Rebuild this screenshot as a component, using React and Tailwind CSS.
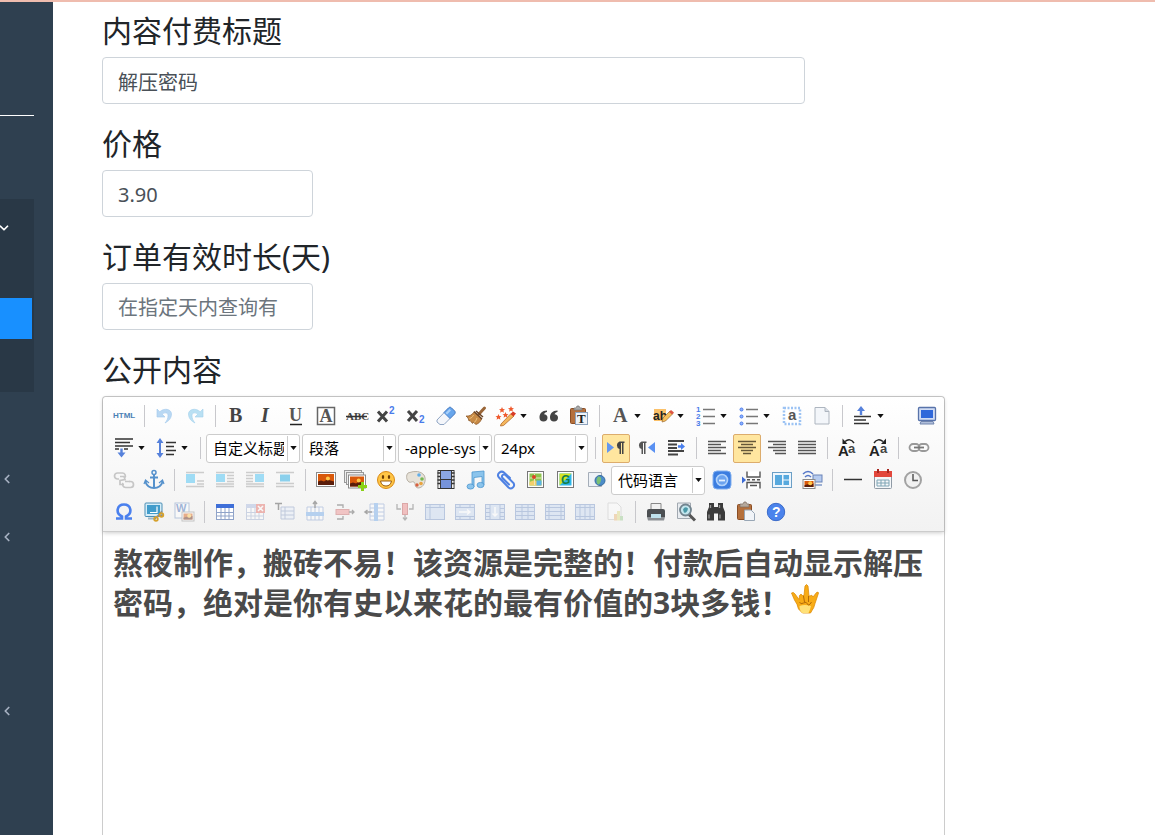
import { ChevronDown, ChevronLeft } from 'lucide-react';

const serif = 'Liberation Serif, serif';
const sans = 'Liberation Sans, sans-serif';

// shared pieces of the toolbar drawings
const Grid = ({ head = '#3f6fd8', line = '#8fa3c9', fill = '#fff' }) => (
  <>
    <rect x="1.500" y="3" width="17" height="14.500" fill={fill} stroke={line} />
    <path d="M2 10.500h16M2 14h16M6 6v11M10 6v11M14 6v11" stroke={line} />
    <rect x="1" y="2" width="18" height="4" fill={head} />
  </>
);

const Cells = ({ children, d }) => (
  <>
    <rect x="0.500" y="2.500" width="19" height="15" fill="#c9daf2" stroke="#7f9bcb" />
    <path d={d} stroke="#7f9bcb" fill="none" />
    {children}
  </>
);

const Photo = ({ x, y, w, h }) => (
  <>
    <rect x={x} y={y} width={w} height={h} fill="#fff" stroke="#8b8b8b" />
    <rect x={x + 1.5} y={y + 1.5} width={w - 3} height={h - 3} fill="#d9590b" />
    <path d={`M${x + 1.5} ${y + h * 0.65}l3-1 3 1 3-2 ${w - 12} 2v${h * 0.35 - 1.5}h${3 - w}z`} fill="#5a1d0a" />
    <circle cx={x + w * 0.6} cy={y + h * 0.42} r="2" fill="#ffc94a" />
  </>
);

const lines = (d, color = '#444', width = 1.5) => <path d={d} stroke={color} strokeWidth={width} fill="none" />;

const icons = {
  html: <text x="-1" y="12" fontFamily={sans} fontSize="8" fontWeight="700" fill="#4a80b5">HTML</text>,
  undo: <path d="M2 3v8h8L7.300 8.300C9.500 6 13 6.500 13 9.500c0 3-1 5-3 7.500 4-2 6.500-5 6.500-9C16.500 3 9 1.500 4.800 5.800z" fill="#b9d8f3" stroke="#a3c9ec" strokeWidth=".6" />,
  redo: <path d="M18 3v8h-8l2.700-2.700C10.500 6 7 6.500 7 9.500c0 3 1 5 3 7.500-4-2-6.500-5-6.500-9C3.500 3 11 1.500 15.200 5.800z" fill="#b9e0f3" stroke="#a3d0ec" strokeWidth=".6" />,
  bold: <text x="3" y="16" fontFamily={serif} fontSize="20" fontWeight="700" fill="#444">B</text>,
  italic: <text x="5" y="16" fontFamily={serif} fontSize="20" fontWeight="700" fontStyle="italic" fill="#444">I</text>,
  underline: (
    <>
      <text x="3" y="15" fontFamily={serif} fontSize="18" fontWeight="700" fill="#555">U</text>
      {lines('M4 18.500h12', '#222')}
    </>
  ),
  fontborder: (
    <>
      <rect x="1.500" y="1.500" width="17" height="17" fill="#fff" stroke="#666" strokeWidth="1.500" />
      <text x="3.500" y="16" fontFamily={serif} fontSize="18" fontWeight="700" fill="#555">A</text>
    </>
  ),
  strike: (
    <>
      <text x="0" y="14" fontFamily={serif} fontSize="11" fontWeight="700" fill="#444">ABC</text>
      {lines('M0 10.500h21', '#333')}
    </>
  ),
  superscript: (
    <>
      {lines('M2 5.500l9 10M11 5.500l-9 10', '#444', 3)}
      <text x="13" y="8" fontFamily={sans} fontSize="10" fontWeight="700" fill="#4a7bea">2</text>
    </>
  ),
  subscript: (
    <>
      {lines('M2 5l9 10M11 5L2 15', '#444', 3)}
      <text x="13" y="17" fontFamily={sans} fontSize="10" fontWeight="700" fill="#4a7bea">2</text>
    </>
  ),
  eraser: (
    <>
      <path d="M1 14L12.500 2c1-1 2-1 3 0l3 3c.8.8.8 2 0 3L8 18.500H4L1 16z" fill="#f4f6fa" stroke="#8fa5c4" />
      <path d="M8 6.500L12.500 2c1-1 2-1 3 0l3 3c.8.8.8 2 0 3L14 12.500z" fill="#68a6ec" stroke="#4b82cb" />
      <path d="M9.500 7l4-4 1.500 1.500-4 4z" fill="#a9d0f9" />
    </>
  ),
  broom: (
    <>
      <path d="M18.500 2L13 8" stroke="#9a6638" strokeWidth="3" strokeLinecap="round" />
      <path d="M8 6l7.500 7c-1 3-3 4.500-5.500 5.500L7 16l-.5 1.500L4 14.500l-1 .5L2 12l-2-2c3 .5 6-1 8-4z" fill="#c78a45" stroke="#865222" strokeWidth=".7" />
      <path d="M8 5.500l8 7.500M10 5l7 6" stroke="#6b4323" strokeWidth="1.500" />
      <path d="M7.500 9c-1 2-2 3-4 3.500m7.500-.5c-1 3-2 4-3 4.500" stroke="#eec27f" />
    </>
  ),
  wand: (
    <>
      <path d="M5 18L15 7.500 18 10 7.500 19.500 4.500 20z" fill="#f4b65c" stroke="#b46a2a" strokeWidth=".8" />
      <path d="M14.500 8l2.500-2.500L20 7.500 17.500 10.500z" fill="#d83b26" />
      <g fill="#ef5a2e">
        <path d="M6 1l.9 2 2.100.2-1.600 1.400.5 2.100L6 5.600 4.100 6.700l.5-2.100L3 3.200 5.100 3z" />
        <path d="M15 0l.9 2 2.100.2-1.600 1.400.5 2.100L15 4.600l-1.900 1.100.5-2.100L12 2.200l2.100-.2z" />
        <path d="M2.500 8l.9 2 2.100.2-1.600 1.400.5 2.100-1.900-1.100-1.900 1.100.5-2.100L-.5 10.200 1.600 10z" />
        <path d="M9.500 6l.9 2 2.100.2-1.600 1.400.5 2.100-1.900-1.100-1.900 1.100.5-2.100L6.500 8.200 8.600 8z" />
      </g>
    </>
  ),
  quote: (
    <g fill="#444">
      <path d="M8 4.500C3 4.500.5 7.500.5 11.500c0 2.500 1.500 4 4 4s4-1.600 4-3.700S7 8.300 5 8.300C5.500 7 6.500 6.300 8 6z" />
      <path d="M18.500 4.500C13.500 4.500 11 7.500 11 11.500c0 2.500 1.500 4 4 4s4-1.600 4-3.700-1.500-3.500-3.500-3.500c.5-1.300 1.500-2 3-2.300z" />
    </g>
  ),
  pastetext: (
    <>
      <rect x="1.500" y="2.500" width="15" height="15" rx="1" fill="#b5703c" stroke="#8a4d24" />
      <path d="M5 4V2h2l1-2h2l1 2h2v2z" fill="#aaa" stroke="#777" strokeWidth=".7" />
      <rect x="6.500" y="6.500" width="12" height="12" fill="#eff3f8" stroke="#8ca2bc" />
      <text x="8" y="17" fontFamily={serif} fontSize="13" fontWeight="700" fill="#222">T</text>
    </>
  ),
  forecolor: <text x="3" y="16" fontFamily={serif} fontSize="20" fontWeight="700" fill="#555">A</text>,
  backcolor: (
    <>
      <rect x="1" y="3" width="12" height="12" fill="#fbc169" />
      <text x="0" y="14" fontFamily={sans} fontSize="12" fontWeight="700" fill="#222">ab</text>
      <path d="M9 16l1-4 7-7 3 2.500-7.500 7.500z" fill="#f6c15c" stroke="#9c6a33" strokeWidth=".7" />
      <path d="M16 6l2-2 3 2.500-2 2z" fill="#dc5544" />
    </>
  ),
  ol: (
    <>
      <g fontFamily={sans} fontSize="8" fontWeight="700" fill="#4a7bea">
        <text x="0" y="6">1</text>
        <text x="0" y="13">2</text>
        <text x="0" y="20">3</text>
      </g>
      {lines('M7 3.500h12M7 10.500h12M7 17.500h12', '#777')}
    </>
  ),
  ul: (
    <>
      <g fill="#8eb2ff" stroke="#4a7bea">
        <circle cx="2.500" cy="3.500" r="1.500" />
        <circle cx="2.500" cy="10.500" r="1.500" />
        <circle cx="2.500" cy="17.500" r="1.500" />
      </g>
      {lines('M7 3.500h12M7 10.500h12M7 17.500h12', '#777')}
    </>
  ),
  selectall: (
    <>
      <rect x="2" y="2" width="16" height="16" fill="#fff" stroke="#9cc3f4" strokeWidth="2.500" strokeDasharray="2 1.500" />
      <text x="6" y="14" fontFamily={sans} fontSize="15" fontWeight="700" fill="#555">a</text>
    </>
  ),
  page: (
    <>
      <path d="M3 1.500h10l4 4v12.500H3z" fill="#f3f6fa" stroke="#adb5bf" />
      <path d="M13 1.500v4h4" fill="#d6dce5" stroke="#adb5bf" />
    </>
  ),
  spacetop: (
    <>
      <path d="M8 0l4 5H9.200v4H6.800V5H4z" fill="#5681db" />
      {lines('M1 10.500h17M1 14h12M1 17.500h15', '#333', 1.7)}
    </>
  ),
  screen: (
    <>
      <rect x="1.500" y="1.500" width="17" height="13" rx="1" fill="#d0dcf4" stroke="#5873aa" strokeWidth="1.300" />
      <rect x="4" y="4" width="12" height="8" fill="#2f68da" />
      <path d="M4 15.500h12l1 2.500H3z" fill="#b1bfda" stroke="#7185ae" />
    </>
  ),
  spacebottom: (
    <>
      <path d="M7.500 19.500l4-5H8.700v-4H6.300v4h-2.800z" fill="#5681db" />
      {lines('M1 1h18M1 4.500h15M1 8h18M1 11h4M10 11h4', '#333', 1.7)}
    </>
  ),
  lineheight: (
    <>
      <path d="M3 0l3.500 5H4v10h2.500L3 20l-3.500-5H2V5H-.5z" fill="#5681db" />
      {lines('M9 4.500h10M9 8.500h8M9 12.500h10M9 16.500h8', '#333')}
    </>
  ),
  ltr: (
    <>
      <path d="M1 4l7 5.500L1 15z" fill="#6597ee" />
      <path d="M18.500 3.500h-5a4 4 0 000 7.500v5H15V5h1v11h1.500V5h1z" fill="#444" />
    </>
  ),
  rtl: (
    <>
      <path d="M19 4l-7 5.500 7 5.500z" fill="#5a91f2" />
      <path d="M10.500 3.500h-5a4 4 0 000 7.500v5H7V5h1v11h1.500V5h1z" fill="#555" />
    </>
  ),
  indent: (
    <>
      {lines('M2 3h16M2 6.500h9M2 10h9M2 13h16M2 16.500h10', '#444', 1.8)}
      <path d="M12 7.200h3V5l4 3.500-4 3.500V9.800h-3z" fill="#4a80ee" />
    </>
  ),
  left: lines('M1 3.500h18M1 6.500h13M1 9.500h18M1 12.500h13M1 15.500h18', '#555'),
  center: lines('M1 3.500h18M4 6.500h12M1 9.500h18M4 12.500h12M6 15.500h8', '#655838'),
  right: lines('M1 3.500h18M6 6.500h13M1 9.500h18M6 12.500h13M8 15.500h11', '#555'),
  justify: lines('M1 3.500h18M1 6.500h18M1 9.500h18M1 12.500h18M1 15.500h18', '#555'),
  upper: (
    <>
      <text x="0" y="18" fontFamily={sans} fontSize="15" fontWeight="700" fill="#222">A</text>
      <text x="10" y="15" fontFamily={sans} fontSize="13" fontWeight="700" fill="#444">a</text>
      {lines('M7 3.500q5-4 9 1.500', '#222')}
      <path d="M4.500.5v5.500h5z" fill="#222" />
    </>
  ),
  lower: (
    <>
      <text x="1" y="18" fontFamily={sans} fontSize="15" fontWeight="700" fill="#222">A</text>
      <text x="12" y="15" fontFamily={sans} fontSize="13" fontWeight="700" fill="#444">a</text>
      {lines('M6 5q4-5.500 9-1.500', '#222')}
      <path d="M18 .5v5.500h-5z" fill="#222" />
    </>
  ),
  link: (
    <g fill="none" stroke="#999" strokeWidth="1.800">
      <rect x="0.500" y="6" width="10" height="7" rx="3.500" />
      <rect x="9.500" y="6" width="10" height="7" rx="3.500" />
      <path d="M5 9.500h10" stroke="#777" />
    </g>
  ),
  unlink: (
    <g fill="none" stroke="#c6c6c6" strokeWidth="1.700">
      <path d="M5 9H3.500a3 3 0 010-6h5a3 3 0 012.500 4.500M15 11.500h1.500a3 3 0 010 6h-5a3 3 0 01-2.500-4.500" />
      <path d="M6 6.500h4l1 3-5 1v4h4M11 11.500h5" />
    </g>
  ),
  anchor: (
    <g fill="none" stroke="#5591cc" strokeWidth="2">
      <circle cx="10" cy="2.500" r="2" strokeWidth="1.500" />
      <path d="M10 5v13M6 7.500h8M1.500 12q2 6 8.500 6t8.500-6" />
      <path d="M0 14l1.500-4L5 13M20 14l-1.500-4L15 13" strokeWidth="1.200" />
    </g>
  ),
  imgnone: (
    <>
      {lines('M1 2.500h18M12 11h7M12 14h7M1 16.500h18', '#ccc')}
      <rect x="1" y="4" width="9" height="9" fill="#9fdcf5" />
    </>
  ),
  imgleft: (
    <>
      {lines('M1 2.500h18M12 5.500h7M12 8.500h7M12 11.500h7M1 14h18M1 16.500h18', '#ccc')}
      <rect x="1" y="4" width="9" height="8" fill="#9fdcf5" />
    </>
  ),
  imgright: (
    <>
      {lines('M1 2.500h18M1 5.500h7M1 8.500h7M1 11.500h7M1 14h18M1 16.500h18', '#ccc')}
      <rect x="10" y="4" width="9" height="8" fill="#9fdcf5" />
    </>
  ),
  imgcenter: (
    <>
      {lines('M1 2.500h18M1 13.500h18M1 16.500h18', '#ccc')}
      <rect x="5" y="4.500" width="10" height="7" fill="#8bd0ec" />
    </>
  ),
  image: <Photo x={0.5} y={2.5} w={19} h={14} />,
  images: (
    <>
      <rect x="-1.500" y="0.500" width="17" height="12" fill="#eee" stroke="#999" />
      <rect x=".5" y="2.500" width="17" height="12" fill="#eee" stroke="#999" />
      <Photo x={2.5} y={5} w={17} h={13} />
      <path d="M15 12h3v3H21v3h-3V21h-3v-3h-3v-3h3z" fill="#8ad116" />
    </>
  ),
  smile: (
    <>
      <circle cx="10" cy="10" r="8.500" fill="#ffc545" stroke="#d98a16" />
      <ellipse cx="7" cy="7" rx="1.200" ry="2" fill="#6b3c05" />
      <ellipse cx="13" cy="7" rx="1.200" ry="2" fill="#6b3c05" />
      <path d="M4.500 11h11q-1 5-5.500 5t-5.500-5z" fill="#fff" stroke="#9b5b0b" />
    </>
  ),
  scrawl: (
    <>
      <path d="M2 3Q13-1 18 5c3 5 0 13-6 13-4-1-2-4-4-6-2-1-3 1-5 0-3-2-3-7-1-9z" fill="#e7e2d8" stroke="#b8b1a5" />
      <circle cx="13" cy="5" r="1.800" fill="#62aee8" />
      <circle cx="16" cy="9" r="1.800" fill="#74b851" />
      <circle cx="15" cy="13.500" r="1.800" fill="#e8a33d" />
      <circle cx="11" cy="15" r="1.700" fill="#d8603f" />
    </>
  ),
  video: (
    <>
      <rect x="1.500" y="0" width="17" height="19" fill="#333" />
      <rect x="5" y="1" width="10" height="8" fill="#8ba7e4" />
      <rect x="5" y="10" width="10" height="8" fill="#7693da" />
      {lines('M3.200 1v17M16.800 1v17', '#eee', 1.7)}
      <path d="M1.500 3h3M1.500 6.500h3M1.500 10h3M1.500 13.500h3M15.500 3h3M15.500 6.500h3M15.500 10h3M15.500 13.500h3" stroke="#333" strokeWidth="1.300" />
    </>
  ),
  music: (
    <g fill="#8bc4ec" stroke="#4c97cf" strokeWidth=".8">
      <path d="M6 2l12-1v14h-2V6.500L8 7.500V17H6z" />
      <ellipse cx="4.500" cy="16.500" rx="3.500" ry="2.600" />
      <ellipse cx="14.500" cy="15" rx="3.500" ry="2.600" />
    </g>
  ),
  attach: <path d="M14 8L8 2.500C5 0 0 4 3 7.500l9.500 10c3 2.500 7-1 5-4.500L9.500 5C7 3.500 5 6 6.500 8l6.500 6.500" fill="none" stroke="#4f82e3" strokeWidth="2" strokeLinecap="round" />,
  map: (
    <>
      <rect x="1.500" y="1.500" width="16" height="16" fill="#fff" stroke="#777" />
      <rect x="3.500" y="3.500" width="12" height="12" fill="#8dc44f" />
      <path d="M3.500 12l5-2 7 4v1.500h-12z" fill="#f3cf6b" />
      <path d="M8.500 4v11M4 8h11" stroke="#e9e6bb" />
      <path d="M10.500 10.500h5v5h-5z" fill="#59b3e6" />
      <circle cx="8" cy="7" r="2" fill="#dc4328" />
    </>
  ),
  gmap: (
    <>
      <rect x="1.500" y="1.500" width="16" height="16" fill="#fff" stroke="#777" />
      <rect x="3.500" y="3.500" width="12" height="12" fill="#2cb5e8" />
      <path d="M3.500 3.500h12l-12 12z" fill="#d6e522" />
      <text x="5" y="14" fontFamily={sans} fontSize="12" fontWeight="700" fill="#137e47">G</text>
    </>
  ),
  frame: (
    <>
      <path d="M2.500 2.500h13v14h-13z" fill="#eef2f7" stroke="#a5adb8" />
      <circle cx="14" cy="10.500" r="5" fill="#4c8cc9" stroke="#356b9e" />
      <path d="M12 6.500q4 0 3 4t-3 4q-3-3 0-8z" fill="#7bc172" />
    </>
  ),
  webapp: (
    <>
      <rect x="1" y="1" width="18" height="18" rx="4" fill="#3b7de0" stroke="#81b0f0" />
      <circle cx="10" cy="10" r="5.500" fill="#6ba3ef" stroke="#b0d2fb" strokeWidth="1.600" />
      {lines('M7 10.500h6', '#e4f0ff', 1.8)}
    </>
  ),
  pagebreak: (
    <>
      <path d="M0 6.500l4 3.500L0 13.500z" fill="#3d6bd4" />
      <path d="M5 1.500V7h13V1.500M5 18.500v-6h13v6" fill="#fff" stroke="#555" strokeWidth="1.400" />
      {lines('M5 9.800h3M10 9.800h3M15 9.800h3M8 15.500h7', '#555')}
    </>
  ),
  template: (
    <>
      <rect x="0.500" y="2.500" width="19" height="15" fill="#eef6fd" stroke="#6b9fc6" />
      <rect x="3" y="5" width="7" height="10" fill="#57a9de" />
      <path d="M11.500 5H17v4.500h-5.500zM11.500 10.500H17V15h-5.500z" fill="#57a9de" />
    </>
  ),
  background: (
    <>
      <path d="M1 4q5-5 10 0M3 7q3-3 6 0" fill="none" stroke="#5577c7" strokeWidth="1.500" />
      <rect x="11" y="5" width="9" height="7" fill="#b6cbef" stroke="#6a83b8" />
      <path d="M13 14h7v2h-7z" fill="#9db0d3" />
      <Photo x={1} y={9.5} w={12} h={9} />
    </>
  ),
  hr: lines('M1 9.500h18', '#333'),
  date: (
    <>
      <rect x="1.500" y="2.500" width="17" height="16" rx="1" fill="#f5f7f9" stroke="#8f9aa5" />
      <path d="M1 1h18v6H1z" fill="#e2473c" />
      {lines('M5-1v4M15-1v4', '#a62720', 2)}
      <path d="M4 10h12v6H4zM8 10v6M12 10v6M4 13h12" fill="none" stroke="#7ea5b5" />
    </>
  ),
  time: (
    <>
      <circle cx="10" cy="10" r="8" fill="#f1f1f1" stroke="#a2a2a2" strokeWidth="2" />
      {lines('M10 4v6.500h5', '#555')}
    </>
  ),
  omega: <path d="M2 16.500h6v-2C1 11 3 2.500 10 2.500s9 8.500 2 12v2h6" fill="none" stroke="#4a80ee" strokeWidth="2.600" />,
  snap: (
    <>
      <rect x="1" y="1" width="17" height="13.500" rx="1" fill="#d5edf8" stroke="#4c8fb5" />
      <rect x="3" y="3" width="13" height="9" fill="#419ccb" />
      <path d="M6 10.500h7V4.500" fill="none" stroke="#fff" strokeWidth="1.200" />
      <path d="M4 15.500h8v2H4z" fill="#9db8c8" />
      <path d="M18 9l-7 8M19 13l-8 2" stroke="#8f8f8f" strokeWidth="1.300" />
      <g fill="none" stroke="#d6a12c" strokeWidth="1.800">
        <circle cx="12" cy="17" r="1.800" />
        <circle cx="17.500" cy="13" r="1.800" />
      </g>
    </>
  ),
  word: (
    <g opacity=".45">
      <rect x="1" y="1" width="14" height="15" fill="#fff" stroke="#7091bf" />
      <text x="2" y="10" fontFamily={sans} fontSize="11" fontWeight="700" fill="#3968b4">W</text>
      <Photo x={8} y={10} w={12} h={9} />
    </g>
  ),
  table: <Grid />,
  deltable: (
    <g opacity=".4">
      <Grid head="#9aaedb" />
      <rect x="11" y="2" width="9" height="9" fill="#e2574c" />
      {lines('M13 4l5 5M18 4l-5 5', '#fff')}
    </g>
  ),
  tabletitle: (
    <g opacity=".45">
      {lines('M0 1.500h7M3.500 1.500V8', '#444')}
      <path d="M6 5h13v12H6zM6 9h13M6 13h13M10 5v12" fill="#e5edf9" stroke="#8297c0" />
    </g>
  ),
  insrow: (
    <g opacity=".4">
      <path d="M2 5h16v13H2zM6 5v13M10 5v13M14 5v13" fill="#fff" stroke="#7492cb" />
      <rect x="1" y="10" width="18" height="4" fill="#5b9de8" />
      {lines('M10 6v-6.500M8 2L10-.5l2 2.500', '#333')}
    </g>
  ),
  delrow: (
    <g opacity=".45">
      <rect x="1" y="7.500" width="13" height="5" fill="#ee8c8c" stroke="#c45e5e" />
      {lines('M2 3h6v3M2 17h6v-3M14 10h5M17 8l2 2-2 2', '#555', 1.3)}
    </g>
  ),
  inscol: (
    <g opacity=".4">
      <path d="M5 2h14v16H5zM5 6h14M5 10h14M5 14h14" fill="#fff" stroke="#7492cb" />
      <rect x="9" y="1" width="4" height="18" fill="#5b9de8" />
      {lines('M7 10H0M2.500 8L0 10l2.500 2', '#333')}
    </g>
  ),
  delcol: (
    <g opacity=".5">
      <rect x="7.500" y="1.500" width="5" height="11" fill="#ee8c8c" stroke="#c45e5e" />
      {lines('M2 2v5h4M18 2v5h-4M10 13v5M8 15.500l2 2.500 2-2.500', '#777', 1.3)}
    </g>
  ),
  merge: <g opacity=".5"><Cells d="M1 5.500h18M5 3v14.500M15 3v3" /></g>,
  mergeright: (
    <g opacity=".5">
      <Cells d="M1 5.500h18M1 14.500h18M5 3v3M15 3v3M5 15v3M15 15v3">
        {lines('M4 10h11M12 7.500l3 2.500-3 2.500', '#fff')}
      </Cells>
    </g>
  ),
  mergedown: (
    <g opacity=".5">
      <Cells d="M5 3v14.500M15 3v14.500M1 6.500h4M1 10.500h4M1 14.500h4M15 6.500h4M15 10.500h4M15 14.500h4">
        {lines('M10 5v9M7.500 11.500L10 14l2.500-2.500', '#fff')}
      </Cells>
    </g>
  ),
  splitcells: <g opacity=".5"><Cells d="M1 5.500h18M1 9.500h18M1 13.500h18M7 3v14.500M13 3v14.500" /></g>,
  splitrows: <g opacity=".5"><Cells d="M1 5.500h18M1 9.500h18M1 13.500h18M4 3v14.500M16 3v14.500" /></g>,
  splitcols: <g opacity=".5"><Cells d="M1 5.500h18M1 14.500h18M5 3v14.500M10 3v14.500M15 3v14.500" /></g>,
  charts: (
    <g opacity=".3">
      <path d="M3 1h9l4 4v12.500H3z" fill="#fff" stroke="#aaa" />
      <path d="M9 12h3v6.500H9z" fill="#e69730" />
      <path d="M12 9h3v9.500h-3z" fill="#d5cf49" />
      <path d="M15 14h3v4.500h-3z" fill="#6bb55a" />
    </g>
  ),
  print: (
    <>
      <path d="M5 1.500h10v7H5z" fill="#f1f1f1" stroke="#888" />
      <path d="M1 9q0-2 2-2h14q2 0 2 2v6H1z" fill="#4c4f52" />
      <path d="M1 15h18l-1 3.500H2z" fill="#8b8f93" />
      <path d="M5 12h10v4H5z" fill="#bfe1ec" />
    </>
  ),
  preview: (
    <>
      <path d="M1.500 1h13v15.500h-13z" fill="#e8ecf0" stroke="#a1a8b0" />
      <path d="M13 12.500l6 6" stroke="#555" strokeWidth="3" />
      <circle cx="9.500" cy="8" r="5.500" fill="#c3e6ee" stroke="#72848f" strokeWidth="1.800" />
      <path d="M7 7.500q2-4 5-1-1 5-4 4z" fill="#4b99a8" />
    </>
  ),
  search: (
    <g fill="#3b3b3b">
      <path d="M3 1h5v4h4V1h5v4l2 5v8.500h-7v-7H8v7H1V10l2-5z" />
      <path d="M3 12.500v4M14 12.500v4M4.500 3v3M13.500 3v3" stroke="#999" strokeWidth="1.300" />
    </g>
  ),
  paste: (
    <>
      <rect x="1.500" y="2.500" width="14" height="15" rx="1" fill="#b5703c" stroke="#8a4d24" />
      <path d="M4 5V2h3l1-2h2l1 2h2v3z" fill="#b5a99d" stroke="#7b6b5f" strokeWidth=".7" />
      <path d="M8.500 8H15l3.500 3.500v7h-10z" fill="#f1f4f8" stroke="#98a6b5" />
    </>
  ),
  help: (
    <>
      <circle cx="10" cy="10" r="8.700" fill="#4b83ec" stroke="#3b6bc9" />
      <text x="6" y="15" fontFamily={sans} fontSize="14" fontWeight="700" fill="#fff">?</text>
    </>
  ),
};

// '|' is a separator, '>' fills the row, '*' marks a split button, '!' a pressed one
const rows = [
  ['html', '|', 'undo', 'redo', '|', 'bold', 'italic', 'underline', 'fontborder', 'strike', 'superscript', 'subscript', 'eraser', 'broom', '*wand', 'quote', 'pastetext', '|', '*forecolor', '*backcolor', '*ol', '*ul', 'selectall', 'page', '|', '*spacetop', '>', 'screen'],
  ['*spacebottom', '*lineheight', '|', '#自定义标题', '#段落', '#-apple-sys', '#24px', '|', '!ltr', 'rtl', 'indent', '|', 'left', '!center', 'right', 'justify', '|', 'upper', 'lower', '|', 'link'],
  ['unlink', 'anchor', '|', 'imgnone', 'imgleft', 'imgright', 'imgcenter', '|', 'image', 'images', 'smile', 'scrawl', 'video', 'music', 'attach', 'map', 'gmap', 'frame', '#代码语言', 'webapp', 'pagebreak', 'template', 'background', '|', 'hr', 'date', 'time'],
  ['omega', 'snap', 'word', '|', 'table', 'deltable', 'tabletitle', 'insrow', 'delrow', 'inscol', 'delcol', 'merge', 'mergeright', 'mergedown', 'splitcells', 'splitrows', 'splitcols', 'charts', '|', 'print', 'preview', 'search', 'paste', 'help'],
];

const Arrow = () => (
  <svg viewBox="0 0 8 5" className="w-[7px] h-1 shrink-0"><path d="M0 0h8L4 5z" fill="#111" /></svg>
);

function Tool({ item }) {
  if (item === '|') return <span className="w-[11px] flex justify-center"><i className="w-px h-[22px] bg-[#c8c8cc]" /></span>;
  if (item === '>') return <span className="flex-1" />;
  if (item[0] === '#') {
    return (
      <label className="w-[94px] h-[29px] mr-0.5 flex items-center bg-white border border-[#ccc] rounded-[3px] overflow-hidden">
        <select aria-label={item.slice(1)} className="appearance-none flex-1 min-w-0 h-full ml-1.5 text-[15px] text-black overflow-hidden outline-none">
          <option>{item.slice(1)}</option>
        </select>
        <span className="w-3 h-[25px] ml-[3px] border-l border-[#ccc] flex items-center justify-center"><Arrow /></span>
      </label>
    );
  }

  const split = item[0] === '*';
  const pressed = item[0] === '!';
  const name = item.replace(/^[*!]/, '');

  return (
    <button
      type="button"
      aria-label={name}
      className={`h-[29px] flex items-center ${split ? 'w-[43px] pl-[5px] gap-1' : 'w-7 mx-px justify-center'}
        ${pressed ? 'bg-[#ffe69f] border border-[#dcac6c] rounded-[2px]' : ''}`}
    >
      <svg viewBox="0 0 20 20" fill="none" className="w-5 h-5 shrink-0 overflow-visible">{icons[name]}</svg>
      {split && <Arrow />}
    </button>
  );
}

function Field({ id, label, wide, ...rest }) {
  return (
    <div className="mb-[22px]">
      <label htmlFor={id} className="block text-[30px] leading-9 mb-2 text-[#212529]">{label}</label>
      <input
        id={id}
        className={`block h-[47px] px-[15px] pt-0.5 border border-[#ced4da] rounded-[4px] text-xl text-[#495057] placeholder:text-[#6c757d] outline-none ${wide ? 'w-5/6' : 'w-1/4'}`}
        {...rest}
      />
    </div>
  );
}

function Sidebar() {
  return (
    <nav className="w-[53px] shrink-0 bg-[#2f4050] overflow-hidden">
      <hr className="w-[34px] mt-[113px] border-0 h-px bg-white" />
      <div className="w-[34px] h-[193px] mt-[83px] bg-[#293846]">
        <a href="#shop" aria-label="shop" className="flex items-center h-[58px] text-white">
          <ChevronDown className="w-3.5 h-3.5 -ml-[3px]" strokeWidth={3} />
        </a>
        <a href="#content" aria-label="content" className="block w-8 h-[41px] mt-[41px] bg-[#1890ff]" />
      </div>
      {[false, true, true, false, false, true].map((arrow, i) => (
        <a key={i} href={`#menu${i}`} aria-label={`menu ${i}`} className="flex items-center h-[58px] text-[#a7b1c2]">
          {arrow && <ChevronLeft className="w-3.5 h-3.5" strokeWidth={3} />}
        </a>
      ))}
    </nav>
  );
}

// hand sign emoticon
const Hand = () => (
  <svg viewBox="0 0 28 31" className="inline-block w-7 h-[31px] ml-px -mt-3" role="img" aria-label="love">
    <path d="M.5 9q2-1.500 3.500 1l4 5.500.5-4q1.500-2.500 3 0h1.500L14 2q1.500-3 3 0l1 10h1q2-2 3 1l3.500-4.500q2-1 2 .5L24 19.500q-1 4.500-3 7L19.500 29h-8L7.500 25q-1-5-4-9z" fill="#f8ac17" stroke="#dd8d0b" strokeWidth=".8" />
    <path d="M8.500 22q5-2 11.500 0-1 4-2.500 7h-6q-3-2-3-7z" fill="#ffe178" />
    <path d="M8.500 18q1 3 4 1t4 1 4-2M12.500 12l1 6M17.500 12v6" fill="none" stroke="#b36b08" />
  </svg>
);

export default function App() {
  return (
    <div className="min-h-screen flex flex-col bg-white font-['Noto_Sans','Noto_Sans_CJK_SC',sans-serif]">
      <div className="h-0.5 bg-[#efbcae]" />
      <div className="flex-1 flex">
        <Sidebar />
        <main className="flex-1 min-w-0 pl-[49px] pt-[11px] flex">
          <form className="w-full max-w-[843px] flex flex-col">
            <Field id="title" label="内容付费标题" defaultValue="解压密码" wide />
            <Field id="price" label="价格" defaultValue="3.90" />
            <Field id="days" label="订单有效时长(天)" placeholder="在指定天内查询有" />
            <h2 className="text-[30px] leading-9 mb-2 text-[#212529]">公开内容</h2>

            <div className="flex-1 flex flex-col border border-b-0 border-[#ccc] rounded-t-[4px]">
              <div className="pt-[3px] pb-[3px] pl-1.5 pr-0.5 border-b border-[#ccc] rounded-t-[4px] bg-linear-to-b from-white to-[#f2f2f2] shadow-[0_1px_4px_rgba(0,0,0,0.2)]">
                {rows.map((row, i) => (
                  <div key={i} className="min-h-8 flex flex-wrap items-center">
                    {row.map((item, j) => <Tool key={j} item={item} />)}
                  </div>
                ))}
              </div>
              <div className="flex-1 px-2.5 pt-[11px] text-[30px] leading-10 font-bold text-[#4a4a4a]">
                熬夜制作，搬砖不易！该资源是完整的！付款后自动显示解压密码，绝对是你有史以来花的最有价值的3块多钱！<Hand />
              </div>
            </div>
          </form>
        </main>
      </div>
    </div>
  );
}
